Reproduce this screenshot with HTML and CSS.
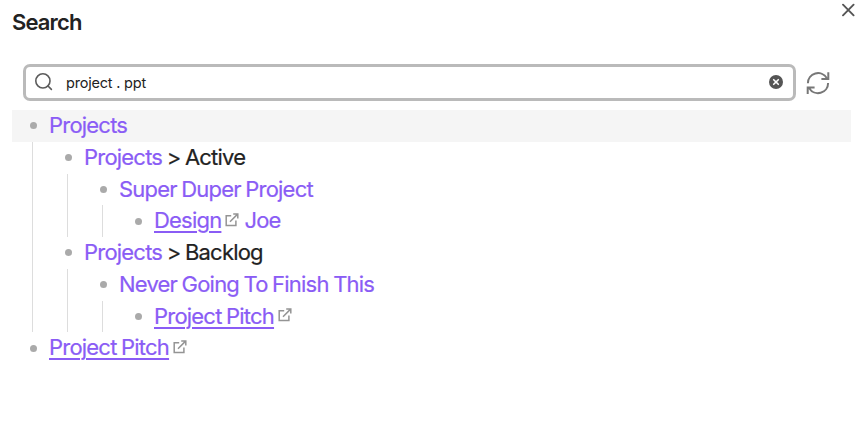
FILE: index.html
```
<!DOCTYPE html>
<html lang="en">
<head>
<meta charset="utf-8">
<title>Search</title>
<link rel="stylesheet" href="styles.css">
</head>
<body>
<svg class="defs" width="0" height="0">
  <symbol id="ext" viewBox="0 0 14 14"><path d="M6.2 2.7H1.2V12.4H10.9V7.6M5 8.7L12.6 1.1M8.2.9H12.8V5.5" fill="none" stroke="#949494" stroke-width="1.5"/></symbol>
</svg>
<header class="header">
  <h1 class="title">Search</h1>
  <svg class="close" viewBox="0 0 14 14"><path d="M2 1.7L12.6 12.3M12.6 1.7L2 12.3" fill="none" stroke="#555" stroke-width="1.9" stroke-linecap="round"/></svg>
</header>
<div class="search">
  <div class="field">
    <svg class="lens" viewBox="0 0 18 18"><circle cx="7.9" cy="7.9" r="7.1"/><path d="M13 13L16.4 16.4"/></svg>
    <span class="query">project . ppt</span>
    <svg class="clear" viewBox="0 0 14 14"><circle cx="7" cy="7" r="7" fill="#555"/><path d="M4.7 4.7L9.3 9.3M9.3 4.7L4.7 9.3" stroke="#fff" stroke-width="1.6" stroke-linecap="round"/></svg>
  </div>
  <svg class="refresh" viewBox="0 0 24 24"><path d="M1.9 12.3A10.1 10.1 0 0 1 20.7 7.1M22.3 1.2V7.9H15.4M22.1 12A10.1 10.1 0 0 1 3.3 17.2M1.7 23.1V16.4H8.6"/></svg>
</div>
<ul class="tree">
  <li>
    <div class="row selected"><span class="page">Projects</span></div>
    <ul>
      <li>
        <div class="row"><span><span class="page">Projects</span> &gt; Active</span></div>
        <ul>
          <li>
            <div class="row"><span class="page">Super Duper Project</span></div>
            <ul>
              <li><div class="row"><a class="link">Design</a><svg class="ext"><use href="#ext"/></svg><span class="page after">Joe</span></div></li>
            </ul>
          </li>
        </ul>
      </li>
      <li>
        <div class="row"><span><span class="page">Projects</span> &gt; Backlog</span></div>
        <ul>
          <li>
            <div class="row"><span class="page">Never Going To Finish This</span></div>
            <ul>
              <li><div class="row"><a class="link">Project Pitch</a><svg class="ext"><use href="#ext"/></svg></div></li>
            </ul>
          </li>
        </ul>
      </li>
    </ul>
  </li>
  <li><div class="row"><a class="link">Project Pitch</a><svg class="ext"><use href="#ext"/></svg></div></li>
</ul>
</body>
</html>
```
FILE: styles.css
```
* { box-sizing: border-box; }
body {
  margin: 0;
  background: #fff;
  color: #222;
  font-family: Inter, "Liberation Sans", sans-serif;
}
.defs { display: block; }
.header {
  display: flex;
  justify-content: space-between;
  height: 63.5px;
  padding: 3px 7px 0 12px;
}
.title {
  margin: 6px 0 0;
  font-size: 22px;
  line-height: 27px;
  font-weight: 600;
  letter-spacing: -0.85px;
}
.close { width: 14px; height: 14px; }
.search {
  display: flex;
  align-items: center;
  height: 37px;
  padding-left: 23px;
}
.field {
  display: flex;
  align-items: center;
  width: 773px;
  height: 37px;
  padding: 0 10px 0 9px;
  border: 3px solid #bababa;
  border-radius: 7px;
}
.lens {
  width: 18px;
  height: 18px;
  fill: none;
  stroke: #5c5c5c;
  stroke-width: 1.6;
  stroke-linecap: round;
}
.query {
  flex: 1;
  margin-left: 13px;
  font-size: 14.5px;
  letter-spacing: -0.2px;
}
.clear { width: 14px; height: 14px; }
.refresh {
  width: 24px;
  height: 24px;
  margin: 1px 0 0 10px;
  fill: none;
  stroke: #777;
  stroke-width: 2;
}
.tree, .tree ul {
  margin: 0;
  padding: 0;
  list-style: none;
}
.tree { margin: 9.5px 11px 0 12px; }
.tree ul {
  margin-left: 20px;
  border-left: 1px solid #ddd;
}
.tree ul > li { padding-left: 14px; }
.row {
  display: flex;
  align-items: center;
  height: 31.75px;
  padding-left: 18px;
  font-size: 22px;
  line-height: 31.75px;
  letter-spacing: -0.79px;
  word-spacing: -0.9px;
  white-space: nowrap;
  -webkit-text-stroke: 0.2px;
}
.row::before {
  content: "";
  width: 7px;
  height: 7px;
  margin-right: 12px;
  border-radius: 50%;
  background: #aaa;
}
.selected { background: #f5f5f5; }
.page, .link { color: #8a5cf5; }
.link {
  text-decoration: underline;
  text-decoration-thickness: 2px;
  text-underline-offset: 3px;
}
.ext {
  width: 14px;
  height: 14px;
  margin: -3px 0 0 4px;
}
.after { margin-left: 5px; }
```
